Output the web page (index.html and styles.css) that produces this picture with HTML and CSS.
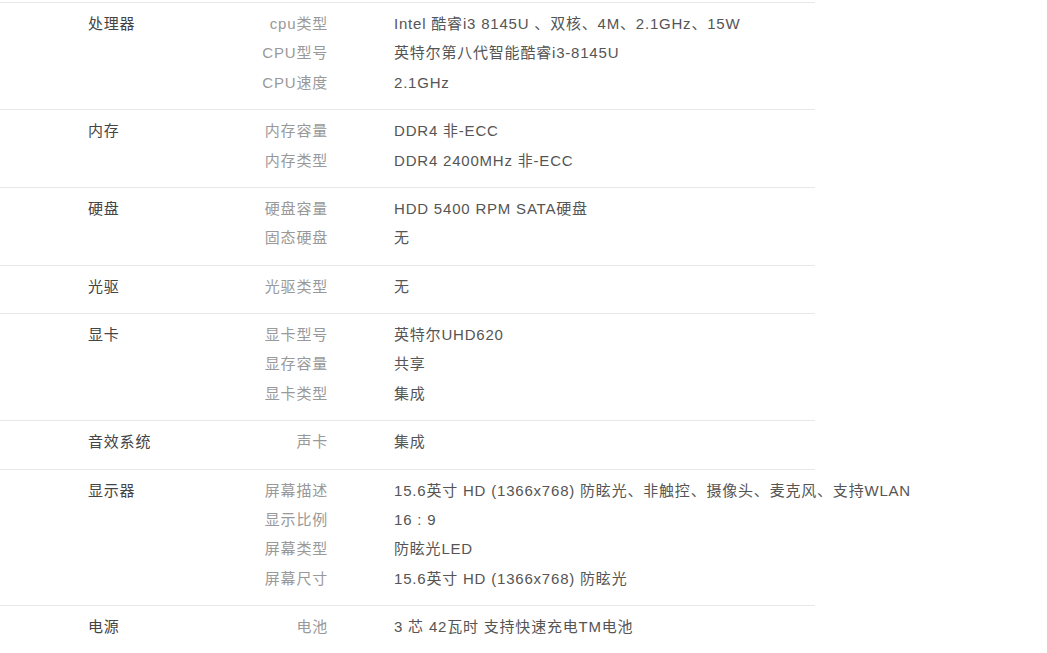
FILE: index.html
```html
<!DOCTYPE html>
<html lang="zh-CN">
<head>
    <meta charset="UTF-8">
    <meta name="viewport" content="width=device-width, initial-scale=1.0">
    <title>规格参数</title>
    <link rel="stylesheet" href="styles.css">
</head>
<body>
    <div class="spec-table">
        <div class="spec-group">
            <div class="spec-name">处理器</div>
            <div class="spec-items">
                <div class="spec-row"><span class="spec-label">cpu类型</span><span class="spec-value">Intel 酷睿i3 8145U 、双核、4M、2.1GHz、15W</span></div>
                <div class="spec-row"><span class="spec-label">CPU型号</span><span class="spec-value">英特尔第八代智能酷睿i3-8145U</span></div>
                <div class="spec-row"><span class="spec-label">CPU速度</span><span class="spec-value">2.1GHz</span></div>
            </div>
        </div>
        <div class="spec-group">
            <div class="spec-name">内存</div>
            <div class="spec-items">
                <div class="spec-row"><span class="spec-label">内存容量</span><span class="spec-value">DDR4 非-ECC</span></div>
                <div class="spec-row"><span class="spec-label">内存类型</span><span class="spec-value">DDR4 2400MHz 非-ECC</span></div>
            </div>
        </div>
        <div class="spec-group">
            <div class="spec-name">硬盘</div>
            <div class="spec-items">
                <div class="spec-row"><span class="spec-label">硬盘容量</span><span class="spec-value">HDD 5400 RPM SATA硬盘</span></div>
                <div class="spec-row"><span class="spec-label">固态硬盘</span><span class="spec-value">无</span></div>
            </div>
        </div>
        <div class="spec-group">
            <div class="spec-name">光驱</div>
            <div class="spec-items">
                <div class="spec-row"><span class="spec-label">光驱类型</span><span class="spec-value">无</span></div>
            </div>
        </div>
        <div class="spec-group">
            <div class="spec-name">显卡</div>
            <div class="spec-items">
                <div class="spec-row"><span class="spec-label">显卡型号</span><span class="spec-value">英特尔UHD620</span></div>
                <div class="spec-row"><span class="spec-label">显存容量</span><span class="spec-value">共享</span></div>
                <div class="spec-row"><span class="spec-label">显卡类型</span><span class="spec-value">集成</span></div>
            </div>
        </div>
        <div class="spec-group">
            <div class="spec-name">音效系统</div>
            <div class="spec-items">
                <div class="spec-row"><span class="spec-label">声卡</span><span class="spec-value">集成</span></div>
            </div>
        </div>
        <div class="spec-group">
            <div class="spec-name">显示器</div>
            <div class="spec-items">
                <div class="spec-row"><span class="spec-label">屏幕描述</span><span class="spec-value">15.6英寸 HD (1366x768) 防眩光、非触控、摄像头、麦克风、支持WLAN</span></div>
                <div class="spec-row"><span class="spec-label">显示比例</span><span class="spec-value">16 : 9</span></div>
                <div class="spec-row"><span class="spec-label">屏幕类型</span><span class="spec-value">防眩光LED</span></div>
                <div class="spec-row"><span class="spec-label">屏幕尺寸</span><span class="spec-value">15.6英寸 HD (1366x768) 防眩光</span></div>
            </div>
        </div>
        <div class="spec-group">
            <div class="spec-name">电源</div>
            <div class="spec-items">
                <div class="spec-row"><span class="spec-label">电池</span><span class="spec-value">3 芯 42瓦时 支持快速充电TM电池</span></div>
            </div>
        </div>
    </div>
</body>
</html>
```

FILE: styles.css
```css
body {
    margin: 0;
    background-color: #fff;
    font-family: "Liberation Sans", Arial, "Noto Sans CJK SC", sans-serif;
    font-size: 15px;
    letter-spacing: 0.8px;
}
.spec-table {
    width: 815px;
    margin-top: 2px;
}
.spec-group {
    display: flex;
    border-top: 1px solid #e8e8e8;
    padding: 6px 0 12px;
}
.spec-name {
    flex-shrink: 0;
    width: 152px;
    padding-left: 88px;
    line-height: 29.375px;
    color: #444;
}
.spec-items {
    flex: 1;
}
.spec-row {
    display: flex;
    line-height: 29.375px;
    white-space: nowrap;
}
.spec-label {
    flex-shrink: 0;
    width: 88px;
    text-align: right;
    color: #999;
}
.spec-value {
    margin-left: 66px;
    color: #555;
}
```
